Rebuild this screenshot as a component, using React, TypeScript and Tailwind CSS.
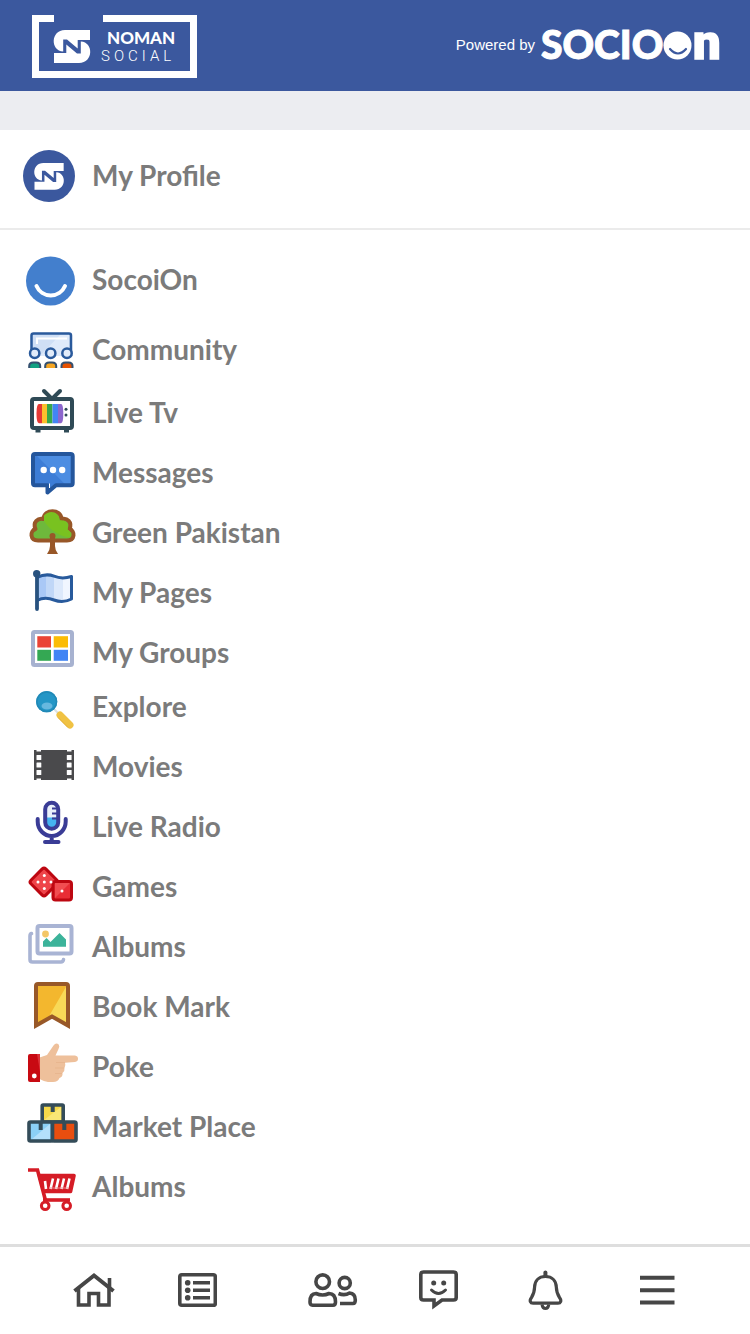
import type { ReactNode } from 'react';

function SnMark() {
    return (
        <g fill="white">
            <path d="M36 0H11C-3.7 0 -3.7 21 9.2 21.5V9.5H13L23.7 18.5V10H36Z" />
            <path d="M0 33H25C39.7 33 39.7 12 26.8 11.5V23.5H23L12.3 14.5V23H0Z" />
        </g>
    );
}

function NomanLogo() {
    return (
        <svg viewBox="0 0 165 63" className="h-[63px] w-[165px]" role="img" aria-label="Noman Social">
            <path d="M22 3.5H3.5V59.5H161.5V3.5H71" fill="none" stroke="white" strokeWidth="7" />
            <g transform="translate(22 15)"><SnMark /></g>
            <text x="75" y="29" fill="white" className="font-[Lato] text-[17px] font-black">NOMAN</text>
            <text x="69" y="46" fill="white" className="font-[Roboto] text-[15px] font-light tracking-[4px]">SOCIAL</text>
        </svg>
    );
}

function SocioonLogo() {
    return (
        <svg viewBox="0 0 182 63" className="h-[63px] w-[182px]" role="img" aria-label="Socioon">
            <text x="0" y="44" fill="white" stroke="white" strokeWidth="1" className="font-[Lato] text-[39px] font-black">SOCIO</text>
            <circle cx="136.5" cy="30.5" r="14" fill="white" />
            <path d="M129 34Q137 43 145 34" fill="none" stroke="#3b589e" strokeWidth="2.2" strokeLinecap="round" />
            <text x="152" y="44" fill="white" stroke="white" strokeWidth="1.5" className="font-[Roboto] text-[49px] font-black">n</text>
        </svg>
    );
}

const icons: Record<string, ReactNode> = {
    profile: (
        <>
            <circle cx="29" cy="30" r="26" fill="#3b589e" />
            <g transform="translate(14.5 17) scale(.81)"><SnMark /></g>
        </>
    ),
    socioon: (
        <>
            <circle cx="30.5" cy="31" r="24.5" fill="#437fcd" />
            <path d="M16.500 36A15.500 15.500 0 0 0 45 36" fill="none" stroke="white" strokeWidth="4" strokeLinecap="round" />
        </>
    ),
    community: (
        <>
            <rect x="11.5" y="13.5" width="39.5" height="27" rx="2" fill="#cfdff5" stroke="#2a5a9c" strokeWidth="2.5" />
            <path d="M17 39L40 15H49V39Z" fill="#dfeafa" />
            <path d="M17 24V18.5H47" fill="none" stroke="white" strokeWidth="2" />
            <path d="M8 36H54V49H8Z" fill="white" />
            {[14.7, 30.7, 47].map((x, i) => (
                <g key={x} stroke="#2a5a9c" strokeWidth="2.5">
                    <circle cx={x} cy="33.3" r="4.7" fill="#e2ecfa" />
                    <path d={`M${x - 5.5} 48V46Q${x - 5.5} 42.500 ${x - 1.5} 42.500H${x + 1.5}Q${x + 5.5} 42.500 ${x + 5.5} 46V48`} fill={['#12a182', '#f5a623', '#e65100'][i]} stroke="#34506f" strokeWidth="2" />
                </g>
            ))}
        </>
    ),
    tv: (
        <>
            <path d="M24 8L32 16L40 8" fill="none" stroke="#2f4a56" strokeWidth="4" strokeLinecap="round" />
            <path d="M18 45V49.5M46.5 45V49.5" stroke="#2f4a56" strokeWidth="5" />
            <rect x="12" y="16" width="40" height="29" rx="2" fill="white" stroke="#2f4a56" strokeWidth="4" />
            <path d="M22 21H19Q16.500 21 16.500 30.500T19 40.300H22Z" fill="#e53935" />
            <path d="M22 21H27V40.3H22Z" fill="#fbc02d" />
            <path d="M27 21H32.5V40.3H27Z" fill="#37a84b" />
            <path d="M32.5 21H38V40.3H32.5Z" fill="#4285f4" />
            <path d="M38 21H41Q43.300 21 43.300 30.500T41 40.300H38Z" fill="#8c66cc" />
            <circle cx="46" cy="26.3" r="1.5" fill="#2f4a56" />
            <circle cx="46" cy="32" r="1.5" fill="#2f4a56" />
        </>
    ),
    messages: (
        <>
            <path d="M13 11H52.7V42.3H36L27.5 49.5V42.3H13Z" fill="#3d7dd6" />
            <path d="M15 11H52.7V42.3H46Z" fill="#4c8de2" />
            <path d="M15 11H50.5Q52.7 11 52.7 13V40Q52.7 42.3 50.5 42.3H36L27.5 49.5V42.3H15Q13 42.3 13 40V13Q13 11 15 11Z" fill="none" stroke="#24569c" strokeWidth="4" strokeLinejoin="round" />
            <path d="M29.5 40.5V45" stroke="white" strokeWidth="1" />
            <g fill="white">
                <circle cx="23.7" cy="27" r="3.2" />
                <circle cx="33" cy="27" r="3.2" />
                <circle cx="42.2" cy="27" r="3.2" />
            </g>
        </>
    ),
    tree: (
        <>
            <path d="M18 37.5C10 37.5 9.5 28 15.5 26C12.5 19 18 14.5 23.5 16C24 5.5 41 5.5 41.5 16C47 14.5 52.5 19 49.5 26C55.500 28 55 37.5 47 37.5Z" fill="#6eb93c" stroke="#985728" strokeWidth="4" strokeLinejoin="round" />
            <path d="M24 12.5C29 6.5 39.500 8 39.500 17.5C45 16.500 49.500 20 47.500 26.5C51 28.500 52 32 49 34.5C42 34 30 28 24 18Z" fill="#79c220" />
            <path d="M30 31H35V43Q35 47 38 51H27Q30 47 30 43Z" fill="#985728" />
            <circle cx="32.5" cy="33" r="3" fill="#985728" />
        </>
    ),
    flag: (
        <>
            <path d="M18 14Q26 10.500 34 13.500T51 13.500V36Q43 40 34 37T18 37Z" fill="#dce9fb" />
            <path d="M18 14Q22 12 26 12V35.500Q22 35.500 18 37Z" fill="#a9c8f6" />
            <path d="M26 12Q30 12 34 13.500V37Q30 35.500 26 35.500Z" fill="#c0d7f7" />
            <path d="M43 15Q47 15 51 13.500V36L43 38Z" fill="#f0f6ff" />
            <path d="M17 14.500Q26 10 34 13.200T51.500 13.500V36Q43 40.500 34 37T17 37.500" fill="none" stroke="#285a9c" strokeWidth="3" strokeLinejoin="round" />
            <path d="M17 12V46" stroke="#28527f" strokeWidth="3.8" strokeLinecap="round" />
            <circle cx="16.7" cy="10.7" r="3.7" fill="#28527f" />
        </>
    ),
    groups: (
        <>
            <rect x="13" y="9" width="39" height="33" rx="1.5" fill="white" stroke="#a7b2d0" strokeWidth="4" />
            <path d="M17.3 13.2H31V24.5H17.3Z" fill="#ea4335" />
            <path d="M33.7 13.2H48V24.5H33.7Z" fill="#fbbc05" />
            <path d="M17.3 26.8H31V37.8H17.3Z" fill="#34a853" />
            <path d="M33.7 26.8H48V37.8H33.7Z" fill="#4285f4" />
        </>
    ),
    explore: (
        <>
            <path d="M34 32L39 37" stroke="#d9e1e6" strokeWidth="2" />
            <path d="M40 38L50 48" stroke="#f0c243" strokeWidth="7" strokeLinecap="round" />
            <path d="M38 40.5L48 50.5" stroke="#e3b03a" strokeWidth="1" />
            <circle cx="26.7" cy="24.7" r="10.6" fill="#2496c6" />
            <circle cx="26.7" cy="24.7" r="9.8" fill="none" stroke="#2189b6" strokeWidth="1.5" />
            <ellipse cx="27" cy="29" rx="5.5" ry="3.5" fill="#67b8df" />
        </>
    ),
    movies: (
        <>
            <path d="M14 13H16.5V14.5H21V13H47V14.5H51.5V13H54V43H51.5V41.5H47V43H21V41.5H16.5V43H14Z" fill="#4a4a4c" />
            {[18, 25.5, 33].map((y) => (
                <g key={y} fill="white">
                    <rect x="16.5" y={y} width="4.8" height="5" rx=".5" />
                    <rect x="46.8" y={y} width="4.8" height="5" rx=".5" />
                </g>
            ))}
        </>
    ),
    radio: (
        <>
            <rect x="25.2" y="5.7" width="13" height="26" rx="6.5" fill="#e9f0fa" />
            <path d="M25.2 20.5H38.2V25.2A6.5 6.5 0 0 1 25.2 25.2Z" fill="#45b3f0" />
            <rect x="25.2" y="5.7" width="13" height="26" rx="6.5" fill="none" stroke="#3a3c96" strokeWidth="4" />
            <path d="M38 11.5H32M38 16.5H32M38 21.5H32" stroke="#3a3c96" strokeWidth="1.8" />
            <path d="M17.7 22V24.5A14 14.5 0 0 0 45.7 24.5V22M31.700 39V45M25 45H38.500" fill="none" stroke="#3a3c96" strokeWidth="4" strokeLinecap="round" />
        </>
    ),
    games: (
        <>
            <rect x="13.5" y="14.5" width="21" height="21" rx="2.5" transform="rotate(45 24 25)" fill="#ee4449" stroke="#bd0711" strokeWidth="3" />
            <rect x="33" y="24.5" width="18.5" height="18.5" rx="2.5" fill="#e92d35" stroke="#bd0711" strokeWidth="3" />
            <path d="M35 26H50L35 41Z" fill="#f14d51" />
            <g fill="white">
                <circle cx="24.3" cy="18.5" r="1.5" />
                <circle cx="18" cy="25" r="1.5" />
                <circle cx="24.3" cy="25" r="1.5" />
                <circle cx="31" cy="25" r="1.5" />
                <circle cx="24.3" cy="31.5" r="1.5" />
                <circle cx="42" cy="34" r="1.5" />
            </g>
        </>
    ),
    albums: (
        <>
            <path d="M11.5 16.5Q10 17 10 19V42.5Q10 45 12.5 45H41Q43 45 43.5 42.5" fill="none" stroke="#a9b4d4" strokeWidth="3.6" strokeLinecap="round" />
            <rect x="17.5" y="9" width="34" height="27.5" rx="2" fill="white" stroke="#a9b4d4" strokeWidth="4" />
            <circle cx="25.5" cy="17" r="3.4" fill="#f3c666" />
            <path d="M23 29.8V24.5L26.5 21L30.5 25L39.5 16L46 22.5V29.8Z" fill="#3cb39a" />
        </>
    ),
    bookmark: (
        <>
            <path d="M16 9Q16 7 18 7H46Q48 7 48 9V48.5L32 39.5L16 48.5Z" fill="#f3b72e" />
            <path d="M46.5 9V46L32 39L30 37.5Z" fill="#f8d957" />
            <path d="M16 9Q16 7 18 7H46Q48 7 48 9V48.5L32 39.5L16 48.5Z" fill="none" stroke="#985828" strokeWidth="4" />
        </>
    ),
    poke: (
        <>
            <path d="M19.5 20.5L27 18L33.5 8.5Q36 5 38.7 7.5Q40 9 38.5 12L35.5 18.500H55Q58 19 58 21.800T55 25L45 25.800Q46 28.500 44.500 31Q45 34 42.500 36Q43 40 39.500 41Q38 45 33 45H28Q24 44.500 19.500 42Z" fill="#eec09b" />
            <path d="M36 25.5H45M35 31H44M35 36.5H42" stroke="#e6b48c" strokeWidth=".8" />
            <path d="M10 17H20V45H10Q8 45 8 43V19Q8 17 10 17Z" fill="#c80a12" />
            <path d="M17 17H20V35Z" fill="#dc3338" />
            <circle cx="14.3" cy="39" r="2.4" fill="white" />
        </>
    ),
    market: (
        <>
            <rect x="22.2" y="8" width="21" height="17" rx="1" fill="#f6d94a" stroke="#344c59" strokeWidth="3.6" />
            <path d="M24 23L41 10V23Z" fill="#f9e676" />
            <rect x="9" y="25" width="23.5" height="19" rx="1.5" fill="#8bd0f6" stroke="#344c59" strokeWidth="3.6" />
            <path d="M12 42L30 27V42Z" fill="#b3e0fb" />
            <rect x="32.5" y="25" width="23.5" height="19" rx="1.5" fill="#e94e0f" stroke="#344c59" strokeWidth="3.6" />
            <path d="M32.7 9V15M20.7 26V33M44.3 26V33" stroke="#344c59" strokeWidth="4" />
        </>
    ),
    cart: (
        <g fill="none" stroke="#d51c26" strokeWidth="3.6">
            <path d="M8 13H17.5L25.5 43.5" />
            <path d="M19.5 18.5H54L50.5 34.5H24Z" fill="#d51c26" strokeLinejoin="round" />
            <path d="M26 32L25 24M30.500 32L33 21.500M36 32L38.500 21.500M41.500 32L44 21.500M47 32L49.500 21.500" stroke="white" strokeWidth="2.6" />
            <path d="M29 31H48" stroke="#ee8b90" strokeWidth="1" />
            <path d="M23 43H50" />
            <circle cx="25.2" cy="48.7" r="3.8" fill="white" strokeWidth="3" />
            <circle cx="46.7" cy="48.7" r="3.8" fill="white" strokeWidth="3" />
        </g>
    ),
};

interface MenuItem {
    icon: string;
    label: string;
    row?: string;
}

const menu: MenuItem[] = [
    { icon: 'socioon', label: 'SocoiOn', row: 'h-[74px]' },
    { icon: 'community', label: 'Community', row: 'h-[66px]' },
    { icon: 'tv', label: 'Live Tv' },
    { icon: 'messages', label: 'Messages' },
    { icon: 'tree', label: 'Green Pakistan' },
    { icon: 'flag', label: 'My Pages' },
    { icon: 'groups', label: 'My Groups' },
    { icon: 'explore', label: 'Explore', row: 'h-[54px] pb-[6px]' },
    { icon: 'movies', label: 'Movies' },
    { icon: 'radio', label: 'Live Radio' },
    { icon: 'games', label: 'Games' },
    { icon: 'albums', label: 'Albums' },
    { icon: 'bookmark', label: 'Book Mark' },
    { icon: 'poke', label: 'Poke' },
    { icon: 'market', label: 'Market Place' },
    { icon: 'cart', label: 'Albums' },
];

function MenuLink({ icon, label, row = 'h-[60px]' }: MenuItem) {
    return (
        <a href="#" className={`flex items-center gap-3 px-5 ${row}`}>
            <svg viewBox="0 0 60 60" className="-my-2 size-[60px] shrink-0" aria-hidden="true">{icons[icon]}</svg>
            <span className="pb-[2px] text-[28px] leading-8 font-bold text-[#7b7b7b]">{label}</span>
        </a>
    );
}

interface TabProps {
    label: string;
    width: number;
    className: string;
    children: ReactNode;
}

function Tab({ label, width, className, children }: TabProps) {
    return (
        <button type="button" aria-label={label} className={className}>
            <svg viewBox={`0 0 ${width} 48`} className="h-12 w-full" fill="none" stroke="#464646" strokeWidth="3.6">
                {children}
            </svg>
        </button>
    );
}

export default function App() {
    return (
        <div className="flex min-h-screen flex-col bg-white font-[Lato,'Noto_Sans',sans-serif]">
            <header className="flex items-center justify-between bg-[#3b589e] pt-[15px] pr-[27px] pb-[13px] pl-8">
                <NomanLogo />
                <div className="flex items-center gap-[6px]">
                    <span className="pb-[2px] font-['Liberation_Sans',sans-serif] text-[15px] text-white">Powered by</span>
                    <SocioonLogo />
                </div>
            </header>
            <div className="h-[39px] bg-[#ecedf1]" />

            <main className="grow">
                <div className="border-b-2 border-[#ebebeb] pt-4 pb-[22px]">
                    <MenuLink icon="profile" label="My Profile" />
                </div>
                <nav className="pt-[13px] pb-[27px]">
                    {menu.map((item) => (
                        <MenuLink key={item.icon} {...item} />
                    ))}
                </nav>
            </main>

            <footer className="flex items-center justify-between border-t-[3px] border-[#dedede] pt-[19px] pr-[75px] pb-5 pl-[73px]">
                <Tab label="Home" width={42} className="mr-[2px] w-[42px]">
                    <path d="M1.5 25L21 9.5L40.5 25" strokeWidth="4" />
                    <path d="M36.5 12V21" />
                    <path d="M5.5 22V39H16V27.5H25.5V39H36V22" />
                </Tab>
                <Tab label="News feed" width={39} className="mr-[30px] w-[39px]">
                    <rect x="1.8" y="8.8" width="35.5" height="30.5" rx="2" />
                    <path d="M15 16.7H32M15 24.3H32M15 31.7H32" />
                    <g fill="#464646" stroke="none">
                        <circle cx="9.7" cy="16.7" r="2.8" />
                        <circle cx="9.7" cy="24.3" r="2.8" />
                        <circle cx="9.7" cy="31.7" r="2.8" />
                    </g>
                </Tab>
                <Tab label="Friends" width={50} className="w-[50px]">
                    <circle cx="14.7" cy="15.7" r="6.8" />
                    <path d="M8 27.5Q14.7 30.5 21 27.5Q27.5 27.5 27.5 36Q27.5 39.2 25 39.2H4.5Q2 39.2 2 36Q2 27.5 8 27.5Z" />
                    <circle cx="36.7" cy="17" r="5.6" />
                    <path d="M30.5 27.5Q36.7 30 41.5 27Q47.3 27.5 47.3 34Q47.3 37.5 45 37.5H32" />
                </Tab>
                <Tab label="Chat" width={40} className="mr-2 w-10">
                    <path d="M4.5 6H34.5Q37.2 6 37.2 8.5V31.5Q37.2 34 34.5 34H23L15 40V34H4.5Q1.8 34 1.8 31.5V8.5Q1.8 6 4.5 6Z" />
                    <path d="M12.5 24Q19.5 31 26.5 24" strokeLinecap="round" strokeWidth="3" />
                    <circle cx="14.7" cy="17" r="2.5" fill="#464646" stroke="none" />
                    <circle cx="24.7" cy="17" r="2.5" fill="#464646" stroke="none" />
                </Tab>
                <Tab label="Notifications" width={35} className="mr-4 w-[35px]">
                    <path d="M17.4 6.5V10" strokeLinecap="round" strokeWidth="4" />
                    <path d="M17.4 10.5C10.5 10.5 6.8 15 6.6 21C6.4 27 5.5 28.5 3.5 31.5C1 35 2.5 37.2 5 37.2H30C32.5 37.2 34 35 31.5 31.5C29.5 28.5 28.5 27 28.3 21C28.1 15 24.3 10.5 17.4 10.5Z" strokeWidth="3.2" />
                    <path d="M14 38.5Q14.5 42.5 17.400 42.5T20.800 38.5" strokeWidth="3" />
                </Tab>
                <Tab label="Menu" width={35} className="w-[35px]">
                    <path d="M0 11.8H34.5M0 24.2H34.5M0 36.5H34.5" strokeWidth="4" />
                </Tab>
            </footer>
        </div>
    );
}
